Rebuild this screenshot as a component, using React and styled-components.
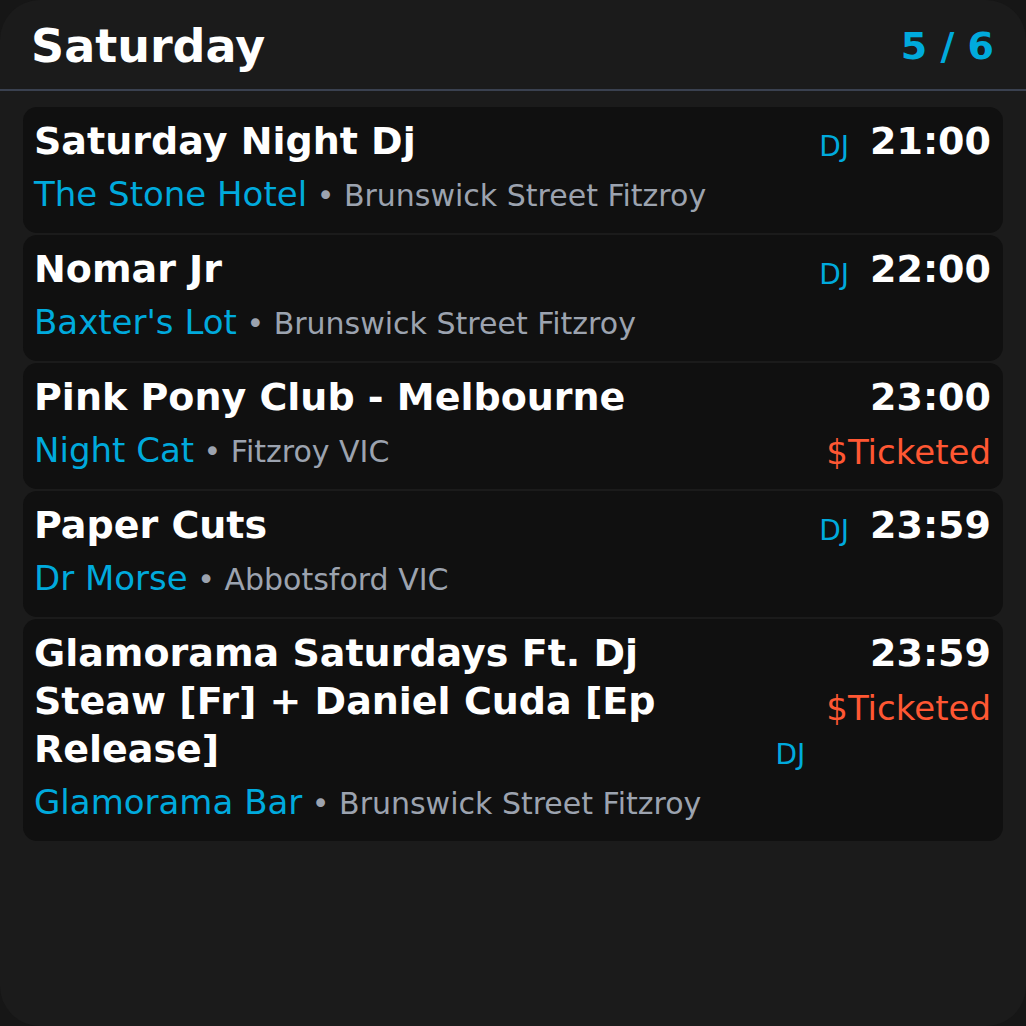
import React from 'react';
import styled, { createGlobalStyle } from 'styled-components';

const GlobalStyle = createGlobalStyle`
  html, body {
    margin: 0;
    padding: 0;
    background: #161616;
  }
  * {
    box-sizing: border-box;
  }
`;

const Screen = styled.div`
  width: 1026px;
  height: 1026px;
  background: #1b1b1b;
  border-radius: 40px;
  overflow: hidden;
  font-family: "DejaVu Sans", "Noto Sans", sans-serif;
  color: #fff;
`;

const Header = styled.header`
  height: 91px;
  display: flex;
  align-items: center;
  justify-content: space-between;
  padding: 2px 32px 0 31px;
  border-bottom: 2px solid #3a4150;
`;

const DayTitle = styled.h1`
  margin: 0;
  font-size: 46px;
  font-weight: 700;
  color: #fff;
`;

const Counter = styled.div`
  font-size: 38px;
  font-weight: 700;
  color: #00aadd;
`;

const List = styled.div`
  display: flex;
  flex-direction: column;
  gap: 2px;
  padding: 16px 23px 0;
`;

const Card = styled.div`
  display: flex;
  gap: 21px;
  background: #101010;
  border-radius: 14px;
  padding: 10px 12px 18px 11px;
`;

const Main = styled.div`
  flex: 1;
  min-width: 0;
  display: flex;
  flex-direction: column;
  gap: 9px;
`;

const TitleRow = styled.div`
  display: flex;
  justify-content: space-between;
  align-items: flex-end;
  gap: 16px;
`;

const Title = styled.div`
  font-size: 38px;
  line-height: 48px;
  font-weight: 700;
  color: #fff;
`;

const Tag = styled.span`
  flex-shrink: 0;
  font-size: 28px;
  line-height: 36px;
  color: #00aadd;
`;

const VenueLine = styled.div`
  font-size: 34px;
  line-height: 41px;
`;

const Venue = styled.span`
  font-size: 34px;
  line-height: 1;
  color: #00aadd;
`;

const Location = styled.span`
  font-size: 30px;
  line-height: 1;
  color: #9ca3af;
`;

const Side = styled.div`
  display: flex;
  flex-direction: column;
  align-items: flex-end;
  flex-shrink: 0;
`;

const Time = styled.div`
  font-size: 38px;
  line-height: 48px;
  font-weight: 700;
  color: #fff;
`;

const Price = styled.div`
  margin-top: 13px;
  font-size: 34px;
  line-height: 37px;
  color: #ff5733;
`;

const events = [
  { title: 'Saturday Night Dj', venue: 'The Stone Hotel', location: 'Brunswick Street Fitzroy', time: '21:00', tag: 'DJ' },
  { title: 'Nomar Jr', venue: "Baxter's Lot", location: 'Brunswick Street Fitzroy', time: '22:00', tag: 'DJ' },
  { title: 'Pink Pony Club - Melbourne', venue: 'Night Cat', location: 'Fitzroy VIC', time: '23:00', ticketed: true },
  { title: 'Paper Cuts', venue: 'Dr Morse', location: 'Abbotsford VIC', time: '23:59', tag: 'DJ' },
  {
    title: 'Glamorama Saturdays Ft. Dj Steaw [Fr] + Daniel Cuda [Ep Release]',
    venue: 'Glamorama Bar',
    location: 'Brunswick Street Fitzroy',
    time: '23:59',
    tag: 'DJ',
    ticketed: true,
  },
];

const EventCard = ({ event }) => (
  <Card>
    <Main>
      <TitleRow>
        <Title>{event.title}</Title>
        {event.tag && <Tag>{event.tag}</Tag>}
      </TitleRow>
      <VenueLine>
        <Venue>{event.venue}</Venue>
        <Location> • {event.location}</Location>
      </VenueLine>
    </Main>
    <Side>
      <Time>{event.time}</Time>
      {event.ticketed && <Price>$Ticketed</Price>}
    </Side>
  </Card>
);

export default function App() {
  return (
    <>
      <GlobalStyle />
      <Screen>
        <Header>
          <DayTitle>Saturday</DayTitle>
          <Counter>5 / 6</Counter>
        </Header>
        <List>
          {events.map((event, i) => (
            <EventCard key={i} event={event} />
          ))}
        </List>
      </Screen>
    </>
  );
}
